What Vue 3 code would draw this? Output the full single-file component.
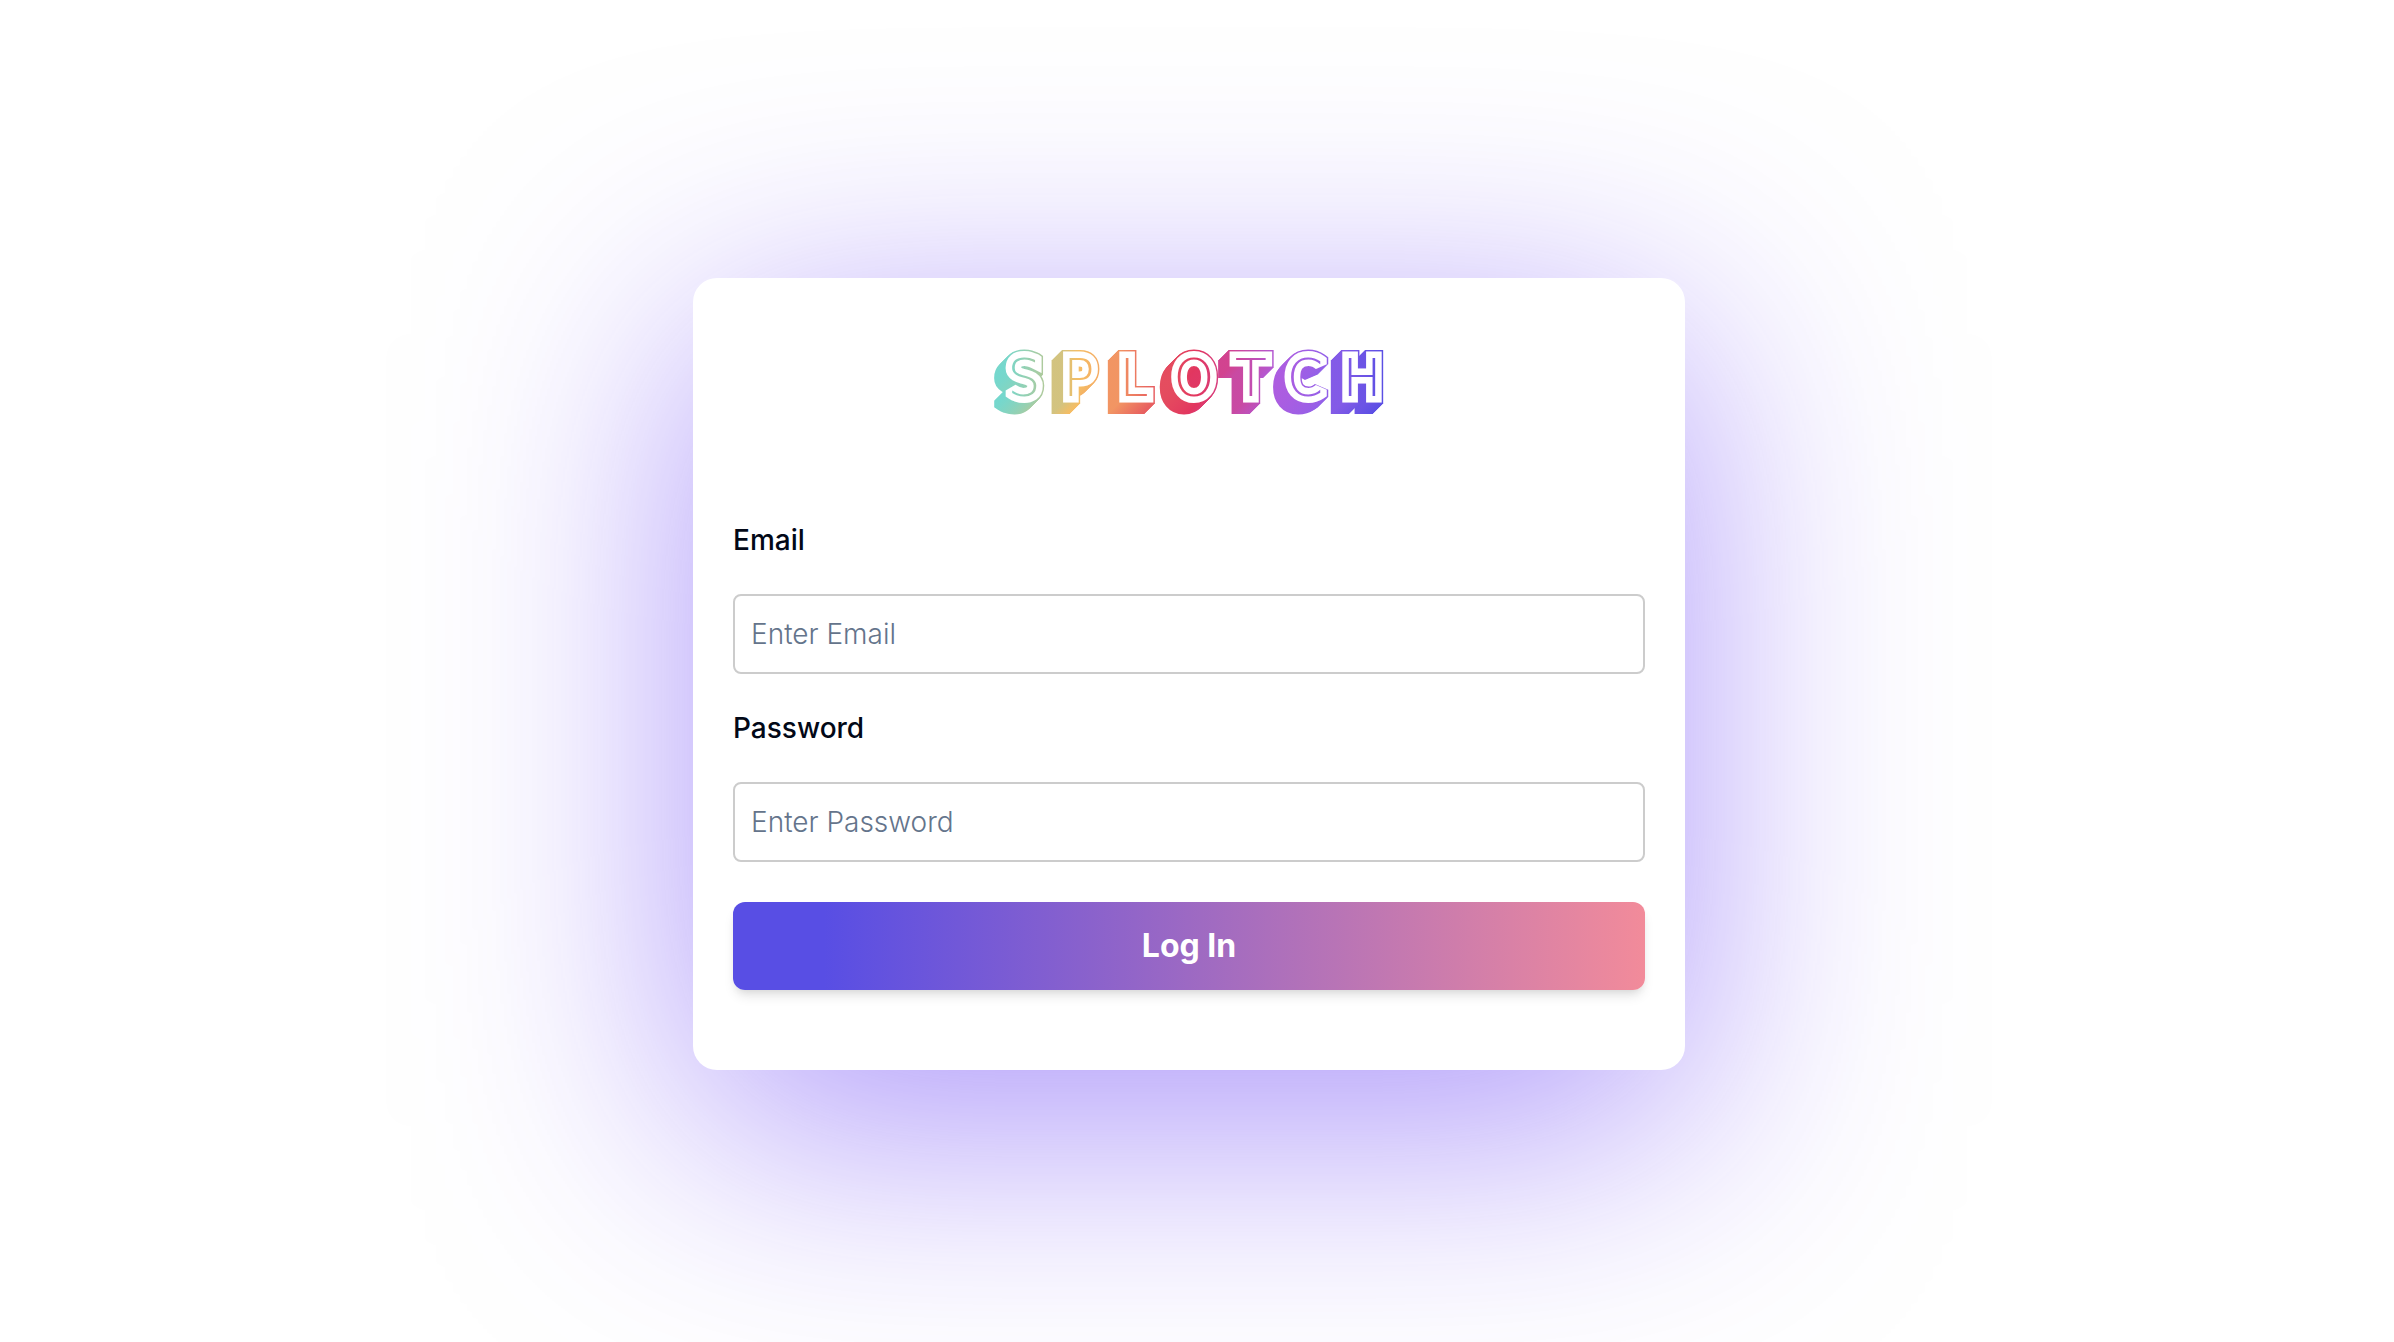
<script setup>
import { ref } from 'vue'

const email = ref('')
const password = ref('')

const letters = 'SPLOTCH'
const letterCentres = '32 87 142 202 259 313 370'
const depth = Array.from({ length: 10 }, (_, i) => 10 - i)
</script>

<template>
  <main class="page">
    <form class="card" @submit.prevent>
      <svg class="logo" width="394" height="68" viewBox="0 0 394 68" role="img" aria-label="Splotch">
        <defs>
          <linearGradient id="rainbow" gradientUnits="userSpaceOnUse" x1="0" y1="0" x2="394" y2="0">
            <stop offset="0" stop-color="#62dcdd" />
            <stop offset="0.14" stop-color="#b4c998" />
            <stop offset="0.22" stop-color="#f5bd64" />
            <stop offset="0.3" stop-color="#f4a264" />
            <stop offset="0.42" stop-color="#e6585f" />
            <stop offset="0.52" stop-color="#e2365f" />
            <stop offset="0.6" stop-color="#d2438f" />
            <stop offset="0.74" stop-color="#ad5de0" />
            <stop offset="0.84" stop-color="#9560e8" />
            <stop offset="1" stop-color="#584ee4" />
          </linearGradient>
        </defs>
        <g class="word">
          <g class="block">
            <use v-for="d in depth" :key="d" href="#word" :x="-d" :y="d" />
            <use href="#word" />
          </g>
          <use class="face" href="#word" />
          <g class="inline">
            <text id="word" :x="letterCentres" y="48">{{ letters }}</text>
          </g>
        </g>
      </svg>

      <label class="label" for="email">Email</label>
      <input id="email" v-model="email" class="field" type="email" placeholder="Enter Email" />
      <label class="label" for="password">Password</label>
      <input id="password" v-model="password" class="field" type="password" placeholder="Enter Password" />
      <button class="submit" type="submit">Log In</button>
    </form>
  </main>
</template>

<style>
body {
  margin: 0;
  background: #fff;
}
</style>

<style scoped>
.page {
  box-sizing: border-box;
  min-height: 100vh;
  padding: 6px 16px 0 0;
  display: flex;
  align-items: center;
  justify-content: center;
  font-family: Inter, sans-serif;
  color: #020817;
}

.card {
  box-sizing: border-box;
  width: 100%;
  max-width: 992px;
  padding: 70px 40px 80px;
  display: flex;
  flex-direction: column;
  border-radius: 24px;
  background: #fff;
  box-shadow: 0 56px 312px rgba(88, 44, 245, 0.5);
}

.logo {
  align-self: center;
  margin-bottom: 104px;
  overflow: visible;
}

.word {
  font-family: "DejaVu Sans", Inter, sans-serif;
  font-size: 52px;
  font-weight: 200;
  text-anchor: middle;
  stroke-linejoin: miter;
  stroke-miterlimit: 2;
}

.block {
  fill: url(#rainbow);
  stroke: url(#rainbow);
  stroke-width: 16px;
}

.face {
  fill: #fff;
  stroke: #fff;
  stroke-width: 13px;
}

.inline {
  fill: url(#rainbow);
}

.label {
  margin-bottom: 34px;
  font-size: 28px;
  font-weight: 500;
  line-height: 40px;
}

.field {
  box-sizing: border-box;
  width: 100%;
  height: 80px;
  margin: 0 0 34px;
  padding: 0 16px;
  border: 2px solid #ccc;
  border-radius: 8px;
  background: #fff;
  color: inherit;
  font-family: inherit;
  font-size: 28px;
  font-weight: 300;
}

.field::placeholder {
  color: #64748b;
  opacity: 1;
}

.submit {
  height: 88px;
  margin-top: 6px;
  padding: 0 0 2px;
  border: 0;
  border-radius: 12px;
  background: linear-gradient(90deg, #584ee4 10%, #f28b9a);
  box-shadow: 0 8px 12px -2px rgba(0, 0, 0, 0.1), 0 4px 8px -4px rgba(0, 0, 0, 0.1);
  color: #fff;
  font-family: inherit;
  font-size: 32px;
  font-weight: 700;
  cursor: pointer;
}
</style>
